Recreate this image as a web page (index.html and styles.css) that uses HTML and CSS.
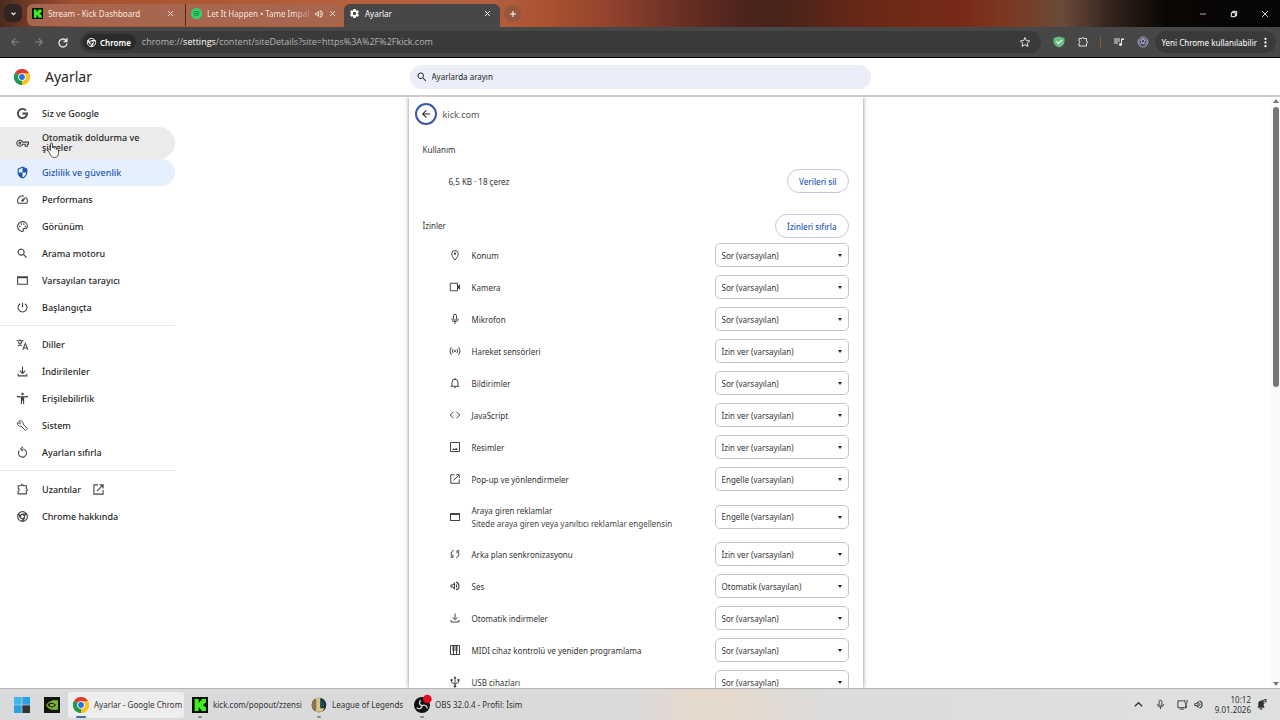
FILE: index.html
```
<!DOCTYPE html>
<html lang="tr">
<head>
  <meta charset="UTF-8" />
  <meta name="viewport" content="width=device-width, initial-scale=1.0" />
  <title>Ayarlar</title>
  <link rel="stylesheet" href="styles.css">
</head>
<body>

  <!-- Simgeler -->
  <svg class="sprite" aria-hidden="true">
    <symbol id="i-close" viewBox="0 0 24 24"><path d="M4 4l16 16M20 4L4 20" fill="none" stroke="currentColor" stroke-width="3.400"/></symbol>
    <symbol id="i-sound" viewBox="0 0 24 24"><path d="M3 9v6h4l5 5V4L7 9H3zm7-.2v6.4L7.800 13H5v-2h2.800zM16.500 12A4.500 4.500 0 0 0 14 8v8a4.500 4.500 0 0 0 2.500-4zM14 3.200v2.100a7 7 0 0 1 0 13.400v2.100a9 9 0 0 0 0-17.600z"/></symbol>
    <symbol id="i-gear" viewBox="0 0 24 24"><path d="M19.400 13c0-.3.1-.6.1-1s0-.7-.1-1l2.100-1.600c.2-.2.300-.4.100-.7l-2-3.400c-.1-.2-.4-.3-.6-.2l-2.500 1a7 7 0 0 0-1.700-1L14.500 2.400c0-.2-.2-.4-.5-.4h-4c-.3 0-.5.200-.5.400l-.4 2.700c-.6.200-1.200.6-1.700 1l-2.500-1c-.2-.1-.5 0-.6.200l-2 3.400c-.1.300-.1.500.1.700L4.600 11a8 8 0 0 0 0 2l-2.100 1.600c-.2.200-.3.400-.1.700l2 3.400c.1.200.4.300.6.200l2.500-1c.5.400 1.100.7 1.700 1l.4 2.700c0 .2.200.4.500.4h4c.3 0 .5-.2.500-.4l.4-2.700c.6-.2 1.200-.6 1.700-1l2.500 1c.2.100.5 0 .6-.2l2-3.400c.1-.3.100-.5-.1-.7L19.400 13zM12 15.600a3.600 3.600 0 1 1 0-7.200 3.600 3.600 0 0 1 0 7.200z"/></symbol>
    <symbol id="i-back" viewBox="0 0 24 24"><path d="M20 11H7.800l5.600-5.600L12 4l-8 8 8 8 1.400-1.400L7.800 13H20v-2z"/></symbol>
    <symbol id="i-reload" viewBox="0 0 24 24"><path d="M20 4v7h-7M19 10a8 8 0 1 0 1 5" fill="none" stroke="currentColor" stroke-width="2.600"/></symbol>
    <symbol id="i-search" viewBox="0 0 24 24"><path d="M15.500 14h-.8l-.3-.3A6.500 6.500 0 1 0 13.700 14.400l.3.300v.8l5 5 1.500-1.500-5-5zm-6 0a4.500 4.500 0 1 1 0-9 4.500 4.500 0 0 1 0 9z"/></symbol>
    <symbol id="i-chrome" viewBox="0 0 24 24"><g fill="none" stroke="currentColor" stroke-width="2"><circle cx="12" cy="12" r="9"/><circle cx="12" cy="12" r="4"/><path d="M12 8h8.500M8.500 14L4.200 6.700M15.500 14l-4.300 7.200" stroke-width="3"/></g></symbol>
    <symbol id="i-chrome-color" viewBox="0 0 48 48"><path d="M24 24L3.200 12a24 24 0 0 1 41.600 0z" fill="#e33b2e"/><path d="M24 24L44.800 12A24 24 0 0 1 24 48z" fill="#fcc31e"/><path d="M24 24v24A24 24 0 0 1 3.200 12z" fill="#229a48"/><path d="M24 13h21.300a24 24 0 0 1-21.300 35l9.500-18.500z" fill="#fcc31e"/><path d="M3.200 12L14.500 29.500 24 35l-.5 13A24 24 0 0 1 3.200 12z" fill="#229a48"/><circle cx="24" cy="24" r="11.500" fill="#fff"/><circle cx="24" cy="24" r="8.800" fill="#2a72e2"/></symbol>
    <symbol id="i-kick" viewBox="0 0 24 24"><path d="M0 0h24v24H0z" fill="#081004"/><path d="M4 3h6v5h2V5.500h2V3h7v6h-2v2h-2v2h2v2h2v6h-7v-2.500h-2V16h-2v5H4z" fill="#40ee20"/></symbol>
    <symbol id="i-star" viewBox="0 0 24 24"><path d="M12 3l2.700 6.200 6.700.6-5 4.500 1.500 6.600L12 17.400l-5.900 3.500 1.500-6.600-5-4.500 6.700-.6z" fill="none" stroke="currentColor" stroke-width="2"/></symbol>
    <symbol id="i-ext" viewBox="0 0 24 24"><path d="M4 5h5.500a2 2 0 0 1 4 0H19v5.500a2 2 0 0 1 0 4V20H4v-5.500a2.300 2.300 0 0 0 0-4.500z" fill="none" stroke="currentColor" stroke-width="2"/></symbol>
    <symbol id="i-queue" viewBox="0 0 24 24"><path d="M2 5h12v2H2zm0 4h12v2H2zm0 4h8v2H2zM16 5h6v3h-4v9a3 3 0 1 1-2-2.800z"/></symbol>
    <symbol id="i-user" viewBox="0 0 24 24"><g fill="none" stroke="currentColor" stroke-width="2"><circle cx="12" cy="12" r="10"/><circle cx="12" cy="10" r="3.500"/><path d="M5 19c2-3 4-4 7-4s5 1 7 4M6 16a7 7 0 1 1 12 0"/></g></symbol>
    <symbol id="i-google" viewBox="0 0 24 24"><path d="M18.500 6.500A8.500 8.500 0 1 0 20.500 12H12" fill="none" stroke="currentColor" stroke-width="3.400"/></symbol>
    <symbol id="i-key" viewBox="0 0 24 24"><g fill="none" stroke="currentColor" stroke-width="2"><path d="M12 9.500h11v4h-2V17h-4v-3.500h-5a5.500 5.500 0 1 1 0-4z"/><circle cx="7" cy="11.500" r="1.600"/></g></symbol>
    <symbol id="i-shield" viewBox="0 0 24 24"><path d="M12 1L3 5v6c0 5.500 3.800 10.700 9 12 5.200-1.300 9-6.500 9-12V5l-9-4zm0 11h7c-.5 4.100-3.300 7.800-7 8.900V12H5V6.300l7-3.100V12z"/></symbol>
    <symbol id="i-speed" viewBox="0 0 24 24"><path d="M19 8.500A10 10 0 0 1 20 19H4A9.500 9.500 0 0 1 15 5.500" fill="none" stroke="currentColor" stroke-width="2"/><path d="M10.500 15.500a2 2 0 0 1 0-3L19.500 6l-6 9.500a2 2 0 0 1-3 0z"/></symbol>
    <symbol id="i-palette" viewBox="0 0 24 24"><path d="M12 3a9 9 0 1 0 0 18c1.500 0 2-1 1.500-2-.8-1.800 0-3.500 2-3.500H18c2 0 3-1.500 3-4C21 6.500 17 3 12 3z" fill="none" stroke="currentColor" stroke-width="2"/><circle cx="7" cy="11.500" r="1.500"/><circle cx="10" cy="7.500" r="1.500"/><circle cx="14.500" cy="7.500" r="1.500"/><circle cx="17.300" cy="11.500" r="1.500"/></symbol>
    <symbol id="i-window" viewBox="0 0 24 24"><path d="M2 4h20v16H2zm2 4v10h16V8z" fill-rule="evenodd"/></symbol>
    <symbol id="i-power" viewBox="0 0 24 24"><path d="M12 3v9M7.500 5a8.300 8.300 0 1 0 9 0" fill="none" stroke="currentColor" stroke-width="2"/></symbol>
    <symbol id="i-lang" viewBox="0 0 24 24"><path d="M1 5h13M7.500 2.500V5M3 15c4-2 7.500-5.500 8.500-10M4 7.500c1.500 3.500 4 5.500 7 7.500M12.500 22l4.700-12L22 22M14 18.500h6.500" fill="none" stroke="currentColor" stroke-width="2"/></symbol>
    <symbol id="i-download" viewBox="0 0 24 24"><path d="M12 3v12M7 10.500l5 5 5-5M4 16v4h16v-4" fill="none" stroke="currentColor" stroke-width="2"/></symbol>
    <symbol id="i-access" viewBox="0 0 24 24"><circle cx="12" cy="3.500" r="2.300"/><path d="M2 7c3 .7 6.500 1 10 1s7-.3 10-1l.5 2c-2.500.6-5 1-7.500 1.200V22h-2v-6h-2v6H9V10.200C6.500 10 4 9.600 1.500 9z"/></symbol>
    <symbol id="i-wrench" viewBox="0 0 24 24"><path d="M5 4l3.500 3.500-2 2L3 6c-1 3 0 5 1.500 6.300C6 13.500 8 13.500 9.500 13l8 8 3.500-3.500-8-8C13.500 7.500 13 6 11.500 4.500 10 3 7.500 3 5 4z" fill="none" stroke="currentColor" stroke-width="1.800"/></symbol>
    <symbol id="i-reset" viewBox="0 0 24 24"><path d="M12 5.500a7.500 7.500 0 1 1-6 3M12.500 1.500l-4 4 4 4" fill="none" stroke="currentColor" stroke-width="2"/></symbol>
    <symbol id="i-open" viewBox="0 0 24 24"><path d="M11 3.500H3.500v17h17V13M14 3.500h6.500V10M20 4L9 15" fill="none" stroke="currentColor" stroke-width="2"/></symbol>
    <symbol id="i-pin" viewBox="0 0 24 24"><path d="M12 22c4.500-5 6.500-9 6.500-12.500a6.500 6.500 0 0 0-13 0C5.500 13 7.500 17 12 22z" fill="none" stroke="currentColor" stroke-width="2"/><circle cx="12" cy="9.500" r="2.300"/></symbol>
    <symbol id="i-camera" viewBox="0 0 24 24"><path d="M2.500 4.500h14.500v15H2.500z" fill="none" stroke="currentColor" stroke-width="2"/><path d="M17 11l5-5v12l-5-5z"/></symbol>
    <symbol id="i-mic" viewBox="0 0 24 24"><g fill="none" stroke="currentColor" stroke-width="2"><rect x="9" y="2.500" width="6" height="12" rx="3"/><path d="M5.500 11a6.500 6.500 0 0 0 13 0M12 17.500V22"/></g></symbol>
    <symbol id="i-sensor" viewBox="0 0 24 24"><path d="M5 4.500a11 11 0 0 0 0 15M19 4.500a11 11 0 0 1 0 15M8.200 8a6 6 0 0 0 0 8M15.800 8a6 6 0 0 1 0 8" fill="none" stroke="currentColor" stroke-width="2"/><circle cx="12" cy="12" r="2"/></symbol>
    <symbol id="i-bell" viewBox="0 0 24 24"><path d="M3.500 18.500h17M6 18v-7.500a6 6 0 0 1 12 0V18M12 2v3" fill="none" stroke="currentColor" stroke-width="2"/><path d="M10 20.500h4a2 2 0 0 1-4 0z"/></symbol>
    <symbol id="i-code" viewBox="0 0 24 24"><path d="M9 5.500L2.500 12 9 18.500M15 5.500l6.500 6.500-6.500 6.500" fill="none" stroke="currentColor" stroke-width="2"/></symbol>
    <symbol id="i-image" viewBox="0 0 24 24"><path d="M3 3h18v18H3z" fill="none" stroke="currentColor" stroke-width="2"/><path d="M6 18l3-3.500 2.500 2 3-3 3.500 4.500z"/></symbol>
    <symbol id="i-sync" viewBox="0 0 24 24"><path d="M9.500 4.500a8 8 0 0 0-3 13M3 18.500h5v-5M14.500 19.500a8 8 0 0 0 3-13M21 5.500h-5v5" fill="none" stroke="currentColor" stroke-width="2"/></symbol>
    <symbol id="i-piano" viewBox="0 0 24 24"><path d="M3 3h18v18H3zM9 13v8M15 13v8" fill="none" stroke="currentColor" stroke-width="2"/><path d="M7 3h4v11H7zm6 0h4v11h-4z"/></symbol>
    <symbol id="i-usb" viewBox="0 0 24 24"><path d="M12 4v15M5 9v3.500l7 4 7-4V9" fill="none" stroke="currentColor" stroke-width="2"/><path d="M12 0l3 5H9zM17 6h4v4h-4zM3 6h4v4H3z"/><circle cx="12" cy="20.500" r="2.500"/></symbol>
  </svg>

  <!-- Sekmeler -->
  <div class="tabstrip">
    <button class="tab-search" aria-label="Sekmelerde ara"><svg viewBox="0 0 24 24"><path d="M5 9l7 7 7-7" fill="none" stroke="currentColor" stroke-width="4"/></svg></button>
    <div class="tab">
      <svg class="favicon"><use href="#i-kick"/></svg>
      <span class="tab-title">Stream - Kick Dashboard</span>
      <button aria-label="Kapat"><svg><use href="#i-close"/></svg></button>
    </div>
    <div class="tab second">
      <svg class="favicon" viewBox="0 0 24 24"><circle cx="12" cy="12" r="12" fill="#2fd566"/><path d="M5 8.500c5-1.500 10-1 14 1.200M6 12.500c4-1.200 8-.8 11.500 1.100M7 16c3-.9 6.500-.6 9 .9" fill="none" stroke="#167a3c" stroke-width="2"/></svg>
      <span class="tab-title fade">Let It Happen • Tame Impal</span>
      <svg class="audio"><use href="#i-sound"/></svg>
      <button aria-label="Kapat"><svg><use href="#i-close"/></svg></button>
    </div>
    <div class="tab active">
      <svg class="favicon"><use href="#i-gear"/></svg>
      <span class="tab-title">Ayarlar</span>
      <button aria-label="Kapat"><svg><use href="#i-close"/></svg></button>
    </div>
    <button class="new-tab" aria-label="Yeni sekme"><svg viewBox="0 0 24 24"><path d="M12 3v18M3 12h18" fill="none" stroke="currentColor" stroke-width="3"/></svg></button>
    <div class="window-buttons">
      <button aria-label="Küçült"><svg viewBox="0 0 24 24"><path d="M3 12h18" stroke="currentColor" stroke-width="2"/></svg></button>
      <button aria-label="Geri yükle"><svg viewBox="0 0 24 24"><path d="M4 8h12v12H4zM8 8V4h12v13h-4" fill="none" stroke="currentColor" stroke-width="3"/></svg></button>
      <button aria-label="Kapat"><svg viewBox="0 0 24 24"><path d="M3 3l18 18M21 3L3 21" stroke="currentColor" stroke-width="2.500"/></svg></button>
    </div>
  </div>

  <!-- Adres çubuğu -->
  <div class="toolbar">
    <button class="tool dim" aria-label="Geri"><svg><use href="#i-back"/></svg></button>
    <button class="tool dim flip" aria-label="İleri"><svg><use href="#i-back"/></svg></button>
    <button class="tool" aria-label="Yenile"><svg><use href="#i-reload"/></svg></button>
    <div class="omnibox">
      <span class="chip"><svg><use href="#i-chrome"/></svg>Chrome</span>
      <span class="url">chrome://<b>settings</b>/content/siteDetails?site=https%3A%2F%2Fkick.com</span>
      <button class="tool" aria-label="Yer işareti"><svg><use href="#i-star"/></svg></button>
    </div>
    <button class="tool" aria-label="Koruma"><svg viewBox="0 0 24 24"><path d="M12 1l11 3v7c0 6-5 10-11 12C6 21 1 17 1 11V4z" fill="#66bd7c"/><path d="M7 11l4 4 7-7" fill="none" stroke="#e4f7e8" stroke-width="2.500"/></svg></button>
    <button class="tool" aria-label="Uzantılar"><svg><use href="#i-ext"/></svg></button>
    <span class="tool-line"></span>
    <button class="tool" aria-label="Medya"><svg><use href="#i-queue"/></svg></button>
    <button class="tool profile" aria-label="Profil"><svg><use href="#i-user"/></svg></button>
    <button class="update">Yeni Chrome kullanılabilir<svg viewBox="0 0 24 24"><circle cx="12" cy="4" r="2.500"/><circle cx="12" cy="12" r="2.500"/><circle cx="12" cy="20" r="2.500"/></svg></button>
  </div>

  <header>
    <div class="brand">
      <svg><use href="#i-chrome-color"/></svg>
      <h1>Ayarlar</h1>
    </div>
    <label class="search">
      <svg><use href="#i-search"/></svg>
      <input type="text" placeholder="Ayarlarda arayın" aria-label="Ayarlarda arayın" />
    </label>
  </header>

  <div class="content">
    <nav>
      <a href="#"><svg><use href="#i-google"/></svg>Siz ve Google</a>
      <a href="#" class="hover"><svg><use href="#i-key"/></svg><span>Otomatik doldurma ve şifreler</span>
        <svg class="cursor" viewBox="0 0 24 32"><path d="M7 17V4c0-3 4-3 4 0v8c0-2 4-2 4 0v1c0-2 4-2 4 0v2c0-2 4-2 4 0v8c0 5-3 8-8 8-5 0-7-3-9-7l-4-7c-1-3 3-4 5 0z" fill="#fff" stroke="#222" stroke-width="1.500"/></svg>
      </a>
      <a href="#" class="selected"><svg><use href="#i-shield"/></svg>Gizlilik ve güvenlik</a>
      <a href="#"><svg><use href="#i-speed"/></svg>Performans</a>
      <a href="#"><svg><use href="#i-palette"/></svg>Görünüm</a>
      <a href="#"><svg><use href="#i-search"/></svg>Arama motoru</a>
      <a href="#"><svg><use href="#i-window"/></svg>Varsayılan tarayıcı</a>
      <a href="#"><svg><use href="#i-power"/></svg>Başlangıçta</a>
      <hr>
      <a href="#"><svg><use href="#i-lang"/></svg>Diller</a>
      <a href="#"><svg><use href="#i-download"/></svg>İndirilenler</a>
      <a href="#"><svg><use href="#i-access"/></svg>Erişilebilirlik</a>
      <a href="#"><svg><use href="#i-wrench"/></svg>Sistem</a>
      <a href="#"><svg><use href="#i-reset"/></svg>Ayarları sıfırla</a>
      <hr>
      <a href="#"><svg><use href="#i-ext"/></svg>Uzantılar<svg class="external"><use href="#i-open"/></svg></a>
      <a href="#"><svg><use href="#i-chrome"/></svg>Chrome hakkında</a>
    </nav>

    <main>
      <div class="site-title">
        <button aria-label="Geri"><svg><use href="#i-back"/></svg></button>
        <h2>kick.com</h2>
      </div>
      <h3>Kullanım</h3>
      <div class="usage">
        <span>6,5 KB · 18 çerez</span>
        <button class="pill">Verileri sil</button>
      </div>
      <div class="permissions-title">
        <h3>İzinler</h3>
        <button class="pill">İzinleri sıfırla</button>
      </div>

      <div class="row">
        <svg><use href="#i-pin"/></svg>
        <label for="konum">Konum</label>
        <div class="select"><select id="konum"><option>Sor (varsayılan)</option><option>İzin ver</option><option>Engelle</option></select></div>
      </div>
      <div class="row">
        <svg><use href="#i-camera"/></svg>
        <label for="kamera">Kamera</label>
        <div class="select"><select id="kamera"><option>Sor (varsayılan)</option><option>İzin ver</option><option>Engelle</option></select></div>
      </div>
      <div class="row">
        <svg><use href="#i-mic"/></svg>
        <label for="mikrofon">Mikrofon</label>
        <div class="select"><select id="mikrofon"><option>Sor (varsayılan)</option><option>İzin ver</option><option>Engelle</option></select></div>
      </div>
      <div class="row">
        <svg><use href="#i-sensor"/></svg>
        <label for="sensor">Hareket sensörleri</label>
        <div class="select"><select id="sensor"><option>İzin ver (varsayılan)</option><option>İzin ver</option><option>Engelle</option></select></div>
      </div>
      <div class="row">
        <svg><use href="#i-bell"/></svg>
        <label for="bildirim">Bildirimler</label>
        <div class="select"><select id="bildirim"><option>Sor (varsayılan)</option><option>İzin ver</option><option>Engelle</option></select></div>
      </div>
      <div class="row">
        <svg><use href="#i-code"/></svg>
        <label for="javascript">JavaScript</label>
        <div class="select"><select id="javascript"><option>İzin ver (varsayılan)</option><option>İzin ver</option><option>Engelle</option></select></div>
      </div>
      <div class="row">
        <svg><use href="#i-image"/></svg>
        <label for="resimler">Resimler</label>
        <div class="select"><select id="resimler"><option>İzin ver (varsayılan)</option><option>İzin ver</option><option>Engelle</option></select></div>
      </div>
      <div class="row">
        <svg><use href="#i-open"/></svg>
        <label for="popup">Pop-up ve yönlendirmeler</label>
        <div class="select"><select id="popup"><option>Engelle (varsayılan)</option><option>İzin ver</option><option>Engelle</option></select></div>
      </div>
      <div class="row tall">
        <svg><use href="#i-window"/></svg>
        <label for="reklam">Araya giren reklamlar<small>Sitede araya giren veya yanıltıcı reklamlar engellensin</small></label>
        <div class="select"><select id="reklam"><option>Engelle (varsayılan)</option><option>İzin ver</option><option>Engelle</option></select></div>
      </div>
      <div class="row">
        <svg><use href="#i-sync"/></svg>
        <label for="arkaplan">Arka plan senkronizasyonu</label>
        <div class="select"><select id="arkaplan"><option>İzin ver (varsayılan)</option><option>İzin ver</option><option>Engelle</option></select></div>
      </div>
      <div class="row">
        <svg><use href="#i-sound"/></svg>
        <label for="ses">Ses</label>
        <div class="select"><select id="ses"><option>Otomatik (varsayılan)</option><option>İzin ver</option><option>Sesi kapat</option></select></div>
      </div>
      <div class="row">
        <svg><use href="#i-download"/></svg>
        <label for="indirme">Otomatik indirmeler</label>
        <div class="select"><select id="indirme"><option>Sor (varsayılan)</option><option>İzin ver</option><option>Engelle</option></select></div>
      </div>
      <div class="row">
        <svg><use href="#i-piano"/></svg>
        <label for="midi">MIDI cihaz kontrolü ve yeniden programlama</label>
        <div class="select"><select id="midi"><option>Sor (varsayılan)</option><option>İzin ver</option><option>Engelle</option></select></div>
      </div>
      <div class="row">
        <svg><use href="#i-usb"/></svg>
        <label for="usb">USB cihazları</label>
        <div class="select"><select id="usb"><option>Sor (varsayılan)</option><option>Engelle</option></select></div>
      </div>
    </main>

    <div class="scrollbar">
      <span class="arrow up"></span>
      <span class="track"><span class="thumb"></span></span>
      <span class="arrow down"></span>
    </div>
  </div>

  <!-- Görev çubuğu -->
  <footer>
    <button class="pinned" aria-label="Başlat"><svg viewBox="0 0 24 24" fill="#1b8fd8"><path d="M0 0h11.500v11.500H0z" fill="#45b5ee"/><path d="M12.500 0H24v11.500H12.500zM0 12.500h11.500V24H0z" fill="#2ba0e3"/><path d="M12.500 12.500H24V24H12.500z"/></svg></button>
    <button class="pinned" aria-label="NVIDIA"><svg viewBox="0 0 24 24"><path d="M0 0h24v24H0z" fill="#11150b"/><path d="M3 12c3-4 6-6 9-6v-1h9v14h-9c-4 0-7-3-9-7z" fill="#7fb334"/><path d="M5 12c3-4 8-5 13 0-4 5-9 5-13 0z" fill="#11150b"/><path d="M8 12c2-2 5-3 8 0-3 3-6 3-8 0z" fill="#7fb334"/></svg></button>
    <button class="task current"><svg><use href="#i-chrome-color"/></svg><span>Ayarlar - Google Chrom</span></button>
    <button class="task"><svg><use href="#i-kick"/></svg><span>kick.com/popout/zzensi</span></button>
    <button class="task short"><svg viewBox="0 0 24 24"><circle cx="12" cy="12" r="11" fill="#1c3038"/><path d="M12 1a11 11 0 0 0 0 22z" fill="#8c7548"/><path d="M6 1h8v16h6l-3 5H6l2-3V4z" fill="#d8c48c"/><path d="M14 5a8 8 0 0 1 6 10h-6z" fill="#16505c"/></svg><span>League of Legends</span></button>
    <button class="task"><svg class="obs" viewBox="0 0 24 24"><circle cx="12" cy="12" r="12" fill="#111"/><g fill="none" stroke="#d8d8d8" stroke-width="2"><path d="M12 13c-4-1-5-5-2-8M12 13c4-2 7 0 8 4M12 13c0 4-4 6-8 3"/></g><circle cx="20" cy="3" r="6.500" fill="#e10d1e"/></svg><span>OBS 32.0.4 - Profil: İsim</span></button>
    <div class="tray">
      <svg viewBox="0 0 24 24"><path d="M4 16l8-8 8 8" fill="none" stroke="currentColor" stroke-width="3"/></svg>
      <svg class="tray-mic"><use href="#i-mic"/></svg>
      <svg class="tray-net" viewBox="0 0 24 24"><path d="M15 4H2v15h18v-7M6 22h9M17 2v5c0 4 5 4 5 0V2M19.500 10v10" fill="none" stroke="currentColor" stroke-width="2"/></svg>
      <svg><use href="#i-sound"/></svg>
      <div class="clock"><span>10:12</span><span>9.01.2026</span></div>
      <svg viewBox="0 0 24 24"><path d="M3 19h16l-2-4v-5a6 6 0 0 0-12 0v5zM8 20h6v3H8z"/><path d="M12 3h6l-5 6h6M18 1h5l-4 5h5" fill="none" stroke="currentColor" stroke-width="2"/></svg>
    </div>
  </footer>

</body>
</html>
```
FILE: styles.css
```
* {
  box-sizing: border-box;
}

body {
  margin: 0;
  height: 100vh;
  display: flex;
  flex-direction: column;
  overflow: hidden;
  font-family: "Noto Sans", "Open Sans", sans-serif;
  font-size: 8px;
  color: #333;
  background: white;
}

button {
  font: inherit;
  color: inherit;
  background: none;
  border: none;
  padding: 0;
  cursor: pointer;
}

svg {
  display: block;
  width: 12px;
  height: 12px;
  flex: none;
  fill: currentColor;
}

.sprite {
  display: none;
}

h1, h2, h3 {
  margin: 0;
  font-weight: normal;
}

/* Sekmeler */
.tabstrip {
  flex: none;
  height: 27px;
  padding-top: 4px;
  display: flex;
  color: white;
  background: linear-gradient(90deg, #4a2a1e 0%, #6e3826 2%, #a3512f 6%, #b5603c 26%, #b4613f 38%, #a9502f 43%, #8f422b 48%, #6b3024 53%, #4c241d 58%, #48231a 61%, #6b2817 68%, #782a17 75%, #7b3a22 79%, #6a4a3a 83%, #30221b 87%, #0a0705 91%, #060505 100%);
}

.tab-search {
  width: 18px;
  height: 18px;
  margin: 0 5px 0 4px;
  border-radius: 6px;
  background: #2f2522;
  display: grid;
  place-items: center;
}

.tab-search svg {
  width: 7px;
  height: 7px;
}

.tab {
  width: 158px;
  height: 22px;
  padding: 0 11px 3px 5px;
  display: flex;
  align-items: center;
  gap: 5px;
  background: #a9664f;
  border-radius: 6px 0 0 6px;
  color: #f6e6de;
}

.tab.second {
  border-radius: 0 6px 6px 0;
  border-left: 1px solid #54271a;
}

.favicon {
  width: 11px;
  height: 11px;
}

.tab-title {
  flex: 1;
  white-space: nowrap;
}

.tab-title.fade {
  mask-image: linear-gradient(90deg, black 85%, rgba(0, 0, 0, 0.3));
}

.tab button svg {
  width: 7px;
  height: 7px;
}

.tab .audio {
  width: 10px;
  height: 10px;
}

.tab.active {
  width: 156px;
  height: 23px;
  margin-left: 1px;
  padding-right: 9px;
  padding-bottom: 4px;
  background: #474747;
  border-radius: 6px 6px 0 0;
  color: white;
}

.new-tab {
  width: 17px;
  height: 17px;
  margin-left: 4px;
  margin-top: 1px;
  border-radius: 50%;
  background: #96573e;
  display: grid;
  place-items: center;
}

.new-tab svg {
  width: 8px;
  height: 8px;
}

.window-buttons {
  margin-left: auto;
  padding-bottom: 4px;
  display: flex;
}

.window-buttons button {
  width: 31px;
  display: grid;
  place-items: center;
}

.window-buttons svg {
  width: 8px;
  height: 8px;
}

/* Adres çubuğu */
.toolbar {
  flex: none;
  height: 31px;
  padding: 0 4px 0 3px;
  display: flex;
  align-items: center;
  background: #474747;
  border-bottom: 1px solid black;
  color: #e4e4e4;
}

.tool {
  width: 24px;
  height: 22px;
  display: grid;
  place-items: center;
}

.dim {
  color: #8b8b8b;
}

.flip svg {
  transform: scaleX(-1);
}

.omnibox {
  flex: 1;
  height: 22px;
  margin: 0 6px 0 5px;
  padding: 0 4px 0 3px;
  display: flex;
  align-items: center;
  gap: 6px;
  background: #3a3a3a;
  border-radius: 11px;
}

.chip {
  height: 16px;
  padding: 0 5px 0 3px;
  display: flex;
  align-items: center;
  gap: 3px;
  border-radius: 8px;
  background: #2a2a2a;
  color: white;
  font-weight: 600;
}

.chip svg {
  width: 11px;
  height: 11px;
}

.url {
  flex: 1;
  font-family: "Open Sans", "Noto Sans", sans-serif;
  font-size: 9px;
  line-height: 12px;
  color: #b4b4b4;
}

.url b {
  font-weight: normal;
  color: white;
}

.tool-line {
  width: 1px;
  height: 12px;
  margin: 0 6px 0 5px;
  background: #8a5545;
}

.profile {
  color: #9ba3cf;
}

.update {
  height: 22px;
  padding: 0 5px 0 6px;
  display: flex;
  align-items: center;
  gap: 3px;
  white-space: nowrap;
  border-radius: 11px;
  background: #3a3a3a;
  color: white;
}

.update svg {
  width: 11px;
  height: 11px;
}

/* Başlık */
header {
  flex: none;
  height: 39px;
  display: grid;
  grid-template-columns: 1fr 461px 1fr;
  align-items: center;
  border-bottom: 2px solid #cbcbcb;
}

.brand {
  padding-left: 14px;
  display: flex;
  align-items: center;
  gap: 15px;
}

.brand svg {
  width: 16px;
  height: 16px;
}

h1 {
  font-size: 14px;
  color: #1f1f1f;
}

.search {
  height: 24px;
  padding: 0 6px;
  display: flex;
  align-items: center;
  gap: 4px;
  border-radius: 12px;
  background: #ebeef9;
  color: #333;
}

.search input {
  flex: 1;
  min-width: 0;
  padding: 0;
  border: none;
  outline: none;
  background: none;
  font: inherit;
}

.search input::placeholder {
  color: #222;
  opacity: 1;
}

/* İçerik */
.content {
  flex: 1;
  min-height: 0;
  display: grid;
  grid-template-columns: 1fr 454px 1fr 9px;
  overflow: hidden;
}

nav {
  width: 175px;
  padding-top: 3px;
  font-size: 9px;
}

nav a {
  position: relative;
  height: 27px;
  padding-left: 16px;
  display: flex;
  align-items: center;
  gap: 13px;
  border-radius: 0 14px 14px 0;
  font-weight: 500;
  line-height: 10px;
  color: #1f1f1f;
  text-decoration: none;
}

nav svg {
  width: 13px;
  height: 13px;
  color: #444;
}

nav .external {
  margin-left: -2px;
}

nav .hover {
  height: 32px;
  padding-right: 16px;
  border-radius: 0 16px 16px 0;
  background: #ebebeb;
}

nav .selected,
nav .selected svg {
  color: #1c56b4;
}

nav .selected {
  background: #e6f0fd;
}

nav .cursor {
  position: absolute;
  left: 47px;
  top: 15px;
  width: 12px;
  height: 16px;
}

hr {
  margin: 4px 0 5px;
  border: none;
  border-top: 1px solid #e8e8e8;
}

main {
  padding: 0 14px;
  background: white;
  box-shadow: 0 0 4px rgba(0, 0, 0, 0.5);
  overflow: hidden;
}

.site-title {
  height: 34px;
  margin-left: -8px;
  display: flex;
  align-items: center;
  gap: 6px;
}

.site-title button {
  width: 22px;
  height: 22px;
  display: grid;
  place-items: center;
  border: 2px solid #3c57a4;
  border-radius: 50%;
  color: #1f1f1f;
}

h2 {
  font-size: 9px;
  color: #555;
}

h3 {
  font-size: 8px;
  line-height: 38px;
}

.usage,
.permissions-title {
  height: 24px;
  display: flex;
  align-items: center;
  justify-content: space-between;
}

.usage {
  padding-left: 26px;
}

.permissions-title {
  margin: 21px 0 1px;
}

.pill {
  height: 24px;
  padding: 0 11px;
  border: 1px solid #c3c9dc;
  border-radius: 12px;
  color: #1f56b8;
  font-weight: 500;
}

.row {
  height: 32px;
  padding-left: 26px;
  display: flex;
  align-items: center;
  gap: 11px;
}

.row svg {
  color: #444;
}

.row.tall {
  height: 43px;
}

.row label {
  flex: 1;
  min-width: 0;
  line-height: 13px;
}

.row small {
  display: block;
  font-size: 8px;
  color: #444;
}

.select {
  position: relative;
}

.select select {
  appearance: none;
  width: 134px;
  height: 24px;
  padding: 0 6px;
  border: 1px solid #c4c4c4;
  border-radius: 5px;
  background: white;
  font: inherit;
  color: #333;
}

.select::after {
  content: "";
  position: absolute;
  right: 7px;
  top: 11px;
  border: 2px solid transparent;
  border-top: 3px solid #222;
  border-bottom: none;
  pointer-events: none;
}

.scrollbar {
  grid-column: 4;
  padding: 2px 0;
  display: flex;
  flex-direction: column;
  align-items: center;
  gap: 4px;
  background: #fafafa;
}

.arrow {
  border: 3px solid transparent;
}

.arrow.up {
  border-top: none;
  border-bottom: 4px solid #777;
}

.arrow.down {
  border-bottom: none;
  border-top: 4px solid #777;
}

.track {
  flex: 1;
  width: 6px;
}

.thumb {
  display: block;
  height: 49%;
  border-radius: 3px;
  background: #777;
}

/* Görev çubuğu */
footer {
  flex: none;
  height: 32px;
  padding: 2px 13px 2px 8px;
  display: flex;
  align-items: center;
  gap: 3px;
  border-top: 1px solid #b4b4b4;
  background: linear-gradient(90deg, #d9dadc 0%, #dadada 49%, #e6d9cc 54%, #e4d9cf 58%, #dcdcda 64%, #dfe1e1 100%);
}

.pinned {
  width: 27px;
  display: grid;
  place-items: center;
}

.pinned svg,
.task svg {
  width: 16px;
  height: 16px;
}

.obs {
  overflow: visible;
}

.task {
  position: relative;
  width: 116px;
  height: 26px;
  padding: 0 5px;
  display: flex;
  align-items: center;
  gap: 5px;
  border-radius: 3px;
}

.task span {
  white-space: nowrap;
}

.task.short {
  width: 100px;
}

.task.current {
  background: #eeeeee;
}

/* açık pencere göstergesi */
.task::after {
  content: "";
  position: absolute;
  left: 11px;
  bottom: 0;
  width: 4px;
  height: 2px;
  border-radius: 1px;
  background: #888;
}

.task.current::after {
  left: 8px;
  width: 10px;
  background: #3d7593;
}

.tray {
  margin-left: auto;
  display: flex;
  align-items: center;
  gap: 5px;
}

.tray svg {
  width: 11px;
  height: 11px;
}

.tray .tray-mic {
  margin: 0 6px;
}

.clock {
  width: 42px;
  display: flex;
  flex-direction: column;
  text-align: right;
  line-height: 10px;
}
```
